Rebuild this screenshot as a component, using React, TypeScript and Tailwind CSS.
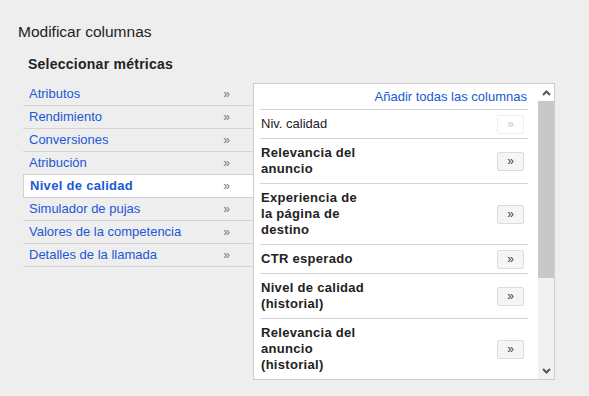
import React from "react";

const categories = [
  "Atributos",
  "Rendimiento",
  "Conversiones",
  "Atribución",
  "Nivel de calidad",
  "Simulador de pujas",
  "Valores de la competencia",
  "Detalles de la llamada",
];

const metrics: { label: string; bold: boolean; disabled?: boolean }[] = [
  { label: "Niv. calidad", bold: false, disabled: true },
  { label: "Relevancia del anuncio", bold: true },
  { label: "Experiencia de la página de destino", bold: true },
  { label: "CTR esperado", bold: true },
  { label: "Nivel de calidad (historial)", bold: true },
  { label: "Relevancia del anuncio (historial)", bold: true },
];

function Chevron({ up }: { up?: boolean }) {
  return (
    <svg width="9" height="6" viewBox="0 0 9 6" className="block">
      <path
        d={up ? "M1 5 L4.5 1.5 L8 5" : "M1 1 L4.5 4.5 L8 1"}
        fill="none"
        stroke="#555"
        strokeWidth="2"
      />
    </svg>
  );
}

export default function App() {
  const selected = "Nivel de calidad";

  return (
    <div className="w-[589px] h-[396px] bg-[#eeeeee] font-['Liberation_Sans',Arial,sans-serif] text-[#222] overflow-hidden">
      <div className="pl-[18px] pt-[22px] text-[15.5px] leading-[20px]">Modificar columnas</div>
      <div className="pl-[28px] pt-[14px] text-[14px] font-bold leading-[16px] tracking-[0.25px]">
        Seleccionar métricas
      </div>

      <div className="flex items-start pl-[23px] pt-[10px]">
        {/* categories */}
        <div className="w-[230px] pt-px">
          {categories.map((c) => {
            const active = c === selected;
            return (
              <div
                key={c}
                className={
                  active
                    ? "flex items-center justify-between h-[24px] -mt-px bg-white border border-r-0 border-[#d0d0d0] pl-[6px] pr-[23px] text-[13px] font-bold tracking-[0.3px] text-[#2158d4]"
                    : "flex items-center justify-between h-[23px] border-b border-[#d4d4d4] pl-[6px] pr-[23px] text-[13px] text-[#2158d4]"
                }
              >
                <span>{c}</span>
                <span className="text-[12px] tracking-normal text-[#777] font-normal">»</span>
              </div>
            );
          })}
        </div>

        {/* metrics panel */}
        <div className="mt-px w-[302px] h-[297px] border border-[#cccccc] bg-white flex">
          <div className="flex-1 overflow-hidden pl-[6px] pr-[10px]">
            <div className="h-[26px] border-b border-[#d4d4d4] flex items-center justify-end pr-px pt-[1px] text-[13px] text-[#2158d4]">
              Añadir todas las columnas
            </div>
            {metrics.map((m, i) => (
              <div
                key={m.label}
                className={
                  i === metrics.length - 1
                    ? "flex items-center justify-between py-[6px] pr-[4px] pl-px"
                    : "flex items-center justify-between border-b border-[#d4d4d4] py-[6px] pr-[4px] pl-px"
                }
              >
                <div
                  className={
                    m.bold
                      ? "w-[108px] text-[13px] leading-[16px] font-bold tracking-[0.3px]"
                      : "w-[108px] text-[13px] leading-[16px]"
                  }
                >
                  {m.label}
                </div>
                <div
                  className={
                    m.disabled
                      ? "-my-[2px] w-[27px] h-[19px] rounded-[2px] border border-[#eeeeee] bg-white flex items-center justify-center text-[12px] text-[#cccccc]"
                      : "-my-[2px] w-[27px] h-[19px] rounded-[2px] border border-[#dcdcdc] bg-[#f5f5f5] flex items-center justify-center text-[12px] text-[#444]"
                  }
                >
                  »
                </div>
              </div>
            ))}
          </div>

          {/* scrollbar */}
          <div className="w-[16px] bg-[#f1f1f1] flex flex-col">
            <div className="h-[17px] flex items-center justify-center bg-white">
              <Chevron up />
            </div>
            <div className="h-[177px] bg-[#c8c8c8]" />
            <div className="flex-1" />
            <div className="h-[17px] flex items-center justify-center">
              <Chevron />
            </div>
          </div>
        </div>
      </div>
    </div>
  );
}
